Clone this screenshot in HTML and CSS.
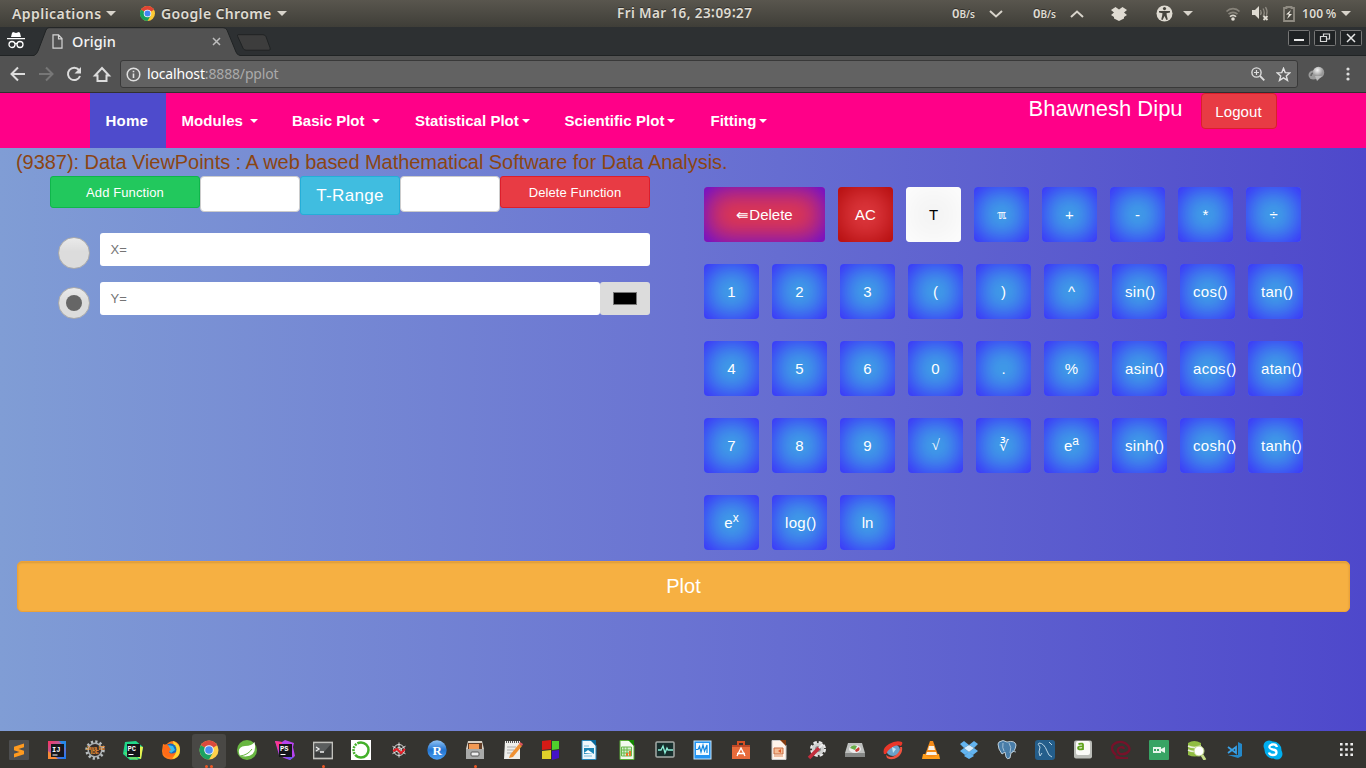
FILE: index.html
```html
<!DOCTYPE html>
<html lang="en">
<head>
<meta charset="utf-8">
<title>Origin</title>
<link rel="stylesheet" href="styles.css">
</head>
<body>
<div class="desktop">
<header class="panel">
  <span class="panel-text apps">Applications</span><i class="tri"></i>
  <svg class="chrome-mini" viewBox="0 0 20 20"><circle cx="10" cy="10" r="10" fill="#fcc934"/><path d="M10 10 1.300 5A10 10 0 0 1 18.700 5z" fill="#e04434"/><path d="M1.300 5A10 10 0 0 0 10 20l4.300-7.500L10 10z" fill="#17a05d"/><circle cx="10" cy="10" r="5" fill="#fff"/><circle cx="10" cy="10" r="4" fill="#4285f4"/></svg>
  <span class="panel-text chrome-name">Google Chrome</span><i class="tri"></i>
  <span class="panel-text clock">Fri Mar 16, 23&#8758;09&#8758;27</span>
  <span class="panel-text net">0<small>B/s</small></span>
  <svg class="chev" width="14" height="8" viewBox="0 0 14 8"><path d="M1 1l6 5.500L13 1" fill="none" stroke="#d8d4cb" stroke-width="2"/></svg>
  <span class="panel-text net net2">0<small>B/s</small></span>
  <svg class="chev" width="14" height="8" viewBox="0 0 14 8"><path d="M1 7l6-5.500L13 7" fill="none" stroke="#d8d4cb" stroke-width="2"/></svg>
  <svg class="dbx" width="16" height="14" viewBox="0 0 16 14"><path d="M4.500 0 8 2.500 11.500 0 16 3l-3 2.500L16 8l-3 2v1.500L8 14l-5-2.500V10L0 8l3-2.500L0 3z" fill="#dfdbd2"/></svg>
  <svg class="access" width="17" height="17" viewBox="0 0 17 17"><circle cx="8.500" cy="8.500" r="8" fill="#dfdbd2"/><circle cx="8.500" cy="3.600" r="1.600" fill="#47453e"/><path d="M3 6h11v1.500l-3.500.8.3 2.200 1 4-1.400.4-1.900-4-1.900 4-1.400-.4 1-4 .3-2.200L3 7.500z" fill="#47453e"/></svg>
  <i class="tri tri-access"></i>
  <svg class="wifi" width="16" height="14" viewBox="0 0 16 14"><g fill="none" stroke-width="1.700"><path d="M1.500 4.500a9 9 0 0 1 13 0" stroke="#87837a"/><path d="M3.500 7.200a6.300 6.300 0 0 1 9 0" stroke="#87837a"/><path d="M5 9.700a4 4 0 0 1 6 0" stroke="#d8d4cb"/></g><circle cx="8" cy="12" r="1.800" fill="#dfdbd2"/></svg>
  <svg class="vol" width="17" height="15" viewBox="0 0 17 15"><path d="M0 4h3l4-4v13L3 9H0z" fill="#dfdbd2"/><path d="M8.500 4q1.500 2.500 0 5M11 2.500q2.500 4 0 8M13.500 1q2.500 4 1 8" fill="none" stroke="#8f8b82" stroke-width="1.300"/><path d="M11.500 10l4 4m0-4l-4 4" stroke="#dfdbd2" stroke-width="1.800"/></svg>
  <svg class="batt" width="12" height="16" viewBox="0 0 12 16"><path d="M3.500 2V1h5v1H11v13H1V2z" fill="none" stroke="#8f8b82" stroke-width="1.800"/><path d="M8 4 3 8.500h3L4 13l5-5H6z" fill="#f0ece3"/></svg>
  <span class="panel-text pct">100&#8201;%</span><i class="tri"></i>
</header>

<div class="tabstrip">
  <svg class="incog" width="18" height="17" viewBox="0 0 18 17"><path d="M5 1l1-1 3 1 3-1 1 1 1 4H4zM0 6h18v1.300H0z" fill="#fff"/><g fill="none" stroke="#fff" stroke-width="1.300"><circle cx="5" cy="12.500" r="3"/><circle cx="13" cy="12.500" r="3"/><path d="M8 12q1-1 2 0"/></g></svg>
  <div class="tab">
    <svg class="tab-shape" width="206" height="29" viewBox="0 0 206 29"><path d="M0 28.500Q3 27 4 24L12 3Q13 .7 15 .7H189Q192 .7 193 3L202 25Q203 28 206 28.500V29H0z" fill="#525252"/><path d="M0 28.500Q3 27 4 24L12 3Q13 .7 15 .7H189Q192 .7 193 3L202 25Q203 28 206 28.500" fill="none" stroke="#202324"/></svg>
    <svg class="doc" width="11" height="15" viewBox="0 0 11 15"><path d="M1 .8h5.500L10 4.500v9.700H1zM6.500.8v4H10" fill="none" stroke="#d5d5d5" stroke-width="1.200"/></svg>
    <span class="tab-title">Origin</span>
    <svg class="tab-x" width="9" height="9" viewBox="0 0 9 9"><path d="M1 1l7 7m0-7L1 8" stroke="#bdbdbd" stroke-width="1.500"/></svg>
  </div>
  <svg class="newtab" width="34" height="17" viewBox="0 0 34 17"><path d="M1 .7h25q2 0 3 2l4 11q1 2.500-1 2.500H9q-2 0-3-2L.7 2.500Q0 .7 1 .7z" fill="#3d3d3d" stroke="#202324"/></svg>
  <div class="winbtns">
    <svg width="22" height="16" viewBox="0 0 22 16"><rect x=".5" y=".5" width="21" height="15" rx="1" fill="#1f2224" stroke="#777"/><path d="M6 10h10" stroke="#e8e8e8" stroke-width="2"/></svg>
    <svg width="22" height="16" viewBox="0 0 22 16"><rect x=".5" y=".5" width="21" height="15" rx="1" fill="#1f2224" stroke="#777"/><path d="M6.500 6.500h6v5h-6zM9.500 6V4h6v5H13" fill="none" stroke="#d8d8d8" stroke-width="1.200"/></svg>
    <svg width="22" height="16" viewBox="0 0 22 16"><rect x=".5" y=".5" width="21" height="15" rx="1" fill="#1f2224" stroke="#777"/><path d="M7 4l8 8m0-8l-8 8" stroke="#e8e8e8" stroke-width="1.500"/></svg>
  </div>
</div>

<div class="toolbar">
  <svg class="nav-icons" width="112" height="36" viewBox="0 0 112 36"><g fill="none" stroke-width="2"><path d="M25 18H12m6-6.500L11.500 18l6.500 6.500" stroke="#dcdcdc"/><path d="M39 18h13m-6-6.500 6.500 6.500-6.500 6.500" stroke="#777"/><path d="M79 14a6.200 6.200 0 1 0 1 6" stroke="#dcdcdc"/><path d="M95 19.500h2.500v5.500h9v-5.500h2.500L102 12z" stroke="#dcdcdc"/></g><path d="M81 11v6.500h-6.500z" fill="#dcdcdc"/></svg>
  <div class="omnibox">
    <svg class="info" width="15" height="15" viewBox="0 0 15 15"><circle cx="7.500" cy="7.500" r="6.300" fill="none" stroke="#e0e0e0" stroke-width="1.500"/><path d="M7.500 6.500v4.500M7.500 3.700v1.600" stroke="#e0e0e0" stroke-width="1.600"/></svg>
    <span class="url">localhost<em>:8888/pplot</em></span>
    <svg class="mag" width="14" height="14" viewBox="0 0 14 14"><circle cx="5.500" cy="5.500" r="4.600" fill="none" stroke="#ddd" stroke-width="1.400"/><path d="M9 9l4.300 4.300" stroke="#ddd" stroke-width="1.800"/><path d="M3 5.500h5M5.500 3v5" stroke="#ddd" stroke-width="1.200"/></svg>
    <svg class="star" width="15" height="15" viewBox="0 0 15 15"><path d="M7.500 1.300 9.200 5.600l4.600.3-3.500 3 1.200 4.500-4-2.500-4 2.500 1.200-4.500-3.500-3 4.600-.3z" fill="none" stroke="#e2e2e2" stroke-width="1.400"/></svg>
  </div>
  <svg class="ext" width="17" height="16" viewBox="0 0 17 16"><defs><radialGradient id="ball" cx=".4" cy=".3"><stop offset="0" stop-color="#f4f4f4"/><stop offset="1" stop-color="#999"/></radialGradient></defs><ellipse cx="5.500" cy="9" rx="5" ry="4.500" fill="#9b9b9b"/><path d="M3 10q0-3 3-3" fill="none" stroke="#666" stroke-width="1.500"/><circle cx="10.500" cy="6.500" r="5.700" fill="url(#ball)"/><path d="M7 10l2 5 5-5z" fill="#bbb"/></svg>
  <svg class="kebab" width="4" height="14" viewBox="0 0 4 14"><g fill="#ddd"><circle cx="2" cy="2" r="1.600"/><circle cx="2" cy="7" r="1.600"/><circle cx="2" cy="12" r="1.600"/></g></svg>
</div>

<main class="page">
  <nav class="nav">
    <a class="item home">Home</a>
    <a class="item modules">Modules <i class="caret"></i></a>
    <a class="item basic">Basic Plot <i class="caret"></i></a>
    <a class="item stat">Statistical Plot<i class="caret"></i></a>
    <a class="item sci">Scientific Plot<i class="caret"></i></a>
    <a class="item fit">Fitting<i class="caret"></i></a>
    <span class="user">Bhawnesh Dipu</span>
    <button class="logout">Logout</button>
  </nav>
  <h1 class="title">(9387): Data ViewPoints : A web based Mathematical Software for Data Analysis.</h1>
  <div class="work">
    <section class="functions">
      <div class="controls">
        <button class="btn add">Add Function</button>
        <div class="range-box"></div>
        <button class="btn trange">T-Range</button>
        <div class="range-box"></div>
        <button class="btn del">Delete Function</button>
      </div>
      <div class="row rx"><span class="radio"></span><div class="field">X=</div></div>
      <div class="row ry"><span class="radio on"></span><div class="field">Y=</div><span class="color"><i></i></span></div>
    </section>
    <section class="keypad">
      <div class="keys"><div class="key wide">&#8666;Delete</div><div class="key ac">AC</div><div class="key t">T</div><div class="key pi">&#8508;</div><div class="key">+</div><div class="key">-</div><div class="key">*</div><div class="key">÷</div></div>
      <div class="keys"><div class="key">1</div><div class="key">2</div><div class="key">3</div><div class="key">(</div><div class="key">)</div><div class="key">^</div><div class="key fn">sin()</div><div class="key fn">cos()</div><div class="key fn">tan()</div></div>
      <div class="keys"><div class="key">4</div><div class="key">5</div><div class="key">6</div><div class="key">0</div><div class="key">.</div><div class="key">%</div><div class="key fn">asin()</div><div class="key fn">acos()</div><div class="key fn">atan()</div></div>
      <div class="keys"><div class="key">7</div><div class="key">8</div><div class="key">9</div><div class="key root">√</div><div class="key">∛</div><div class="key">e<sup>a</sup></div><div class="key fn">sinh()</div><div class="key fn">cosh()</div><div class="key fn">tanh()</div></div>
      <div class="keys"><div class="key">e<sup>x</sup></div><div class="key fn">log()</div><div class="key">ln</div></div>
    </section>
  </div>
  <button class="plot">Plot</button>
</main>

<footer class="dock">
  <span class="app"><svg viewBox="0 0 20 20"><rect width="20" height="20" rx="1" fill="#4d4e50"/><path d="M15 3.500v3.800L9.500 9l5.500 1.800v3.500L5 17.500v-3.800l5.500-1.700L5 10.200V6.700z" fill="#ff9a1f"/></svg></span>
  <span class="app"><svg viewBox="0 0 20 20"><defs><linearGradient id="ij" x2="1" y2="1"><stop offset="0" stop-color="#fe315d"/><stop offset=".5" stop-color="#a268b0"/><stop offset="1" stop-color="#087cfa"/></linearGradient></defs><path d="M1 1h18v18H1z" fill="url(#ij)"/><path d="M12 1h7v8z" fill="#2788e8"/><path d="M1 11v8h10z" fill="#f98b36"/><rect x="4" y="4" width="13" height="13" fill="#16161c"/><text x="5" y="11.500" class="mono">IJ</text><path d="M5.500 15h5" stroke="#fff"/></svg></span>
  <span class="app"><svg viewBox="0 0 20 20"><circle cx="10" cy="10" r="8" fill="none" stroke="#b9bec0" stroke-width="3.500" stroke-dasharray="2.100 2.090"/><circle cx="10" cy="10" r="6.800" fill="#332b28" stroke="#a9aeb0" stroke-width="1.500"/><text x="1" y="9.700" class="tiny">Java EE</text><text x="5.500" y="13.500" class="tiny">IDE</text></svg></span>
  <span class="app"><svg viewBox="0 0 20 20"><path d="M2 2l11-1 7 6-1 5-1 7-11 1-7-6z" fill="#21d789"/><path d="M15 6l5 1-2 12-6-3z" fill="#e8f04f"/><path d="M1 12l6 7 8 1-3-5z" fill="#66dd6d"/><rect x="4" y="4" width="13" height="13" fill="#15151a"/><text x="4.500" y="11" class="mono">PC</text><path d="M5.500 14.500h5" stroke="#fff"/></svg></span>
  <span class="app"><svg viewBox="0 0 20 20"><path d="M2 4l3 1q3-4 8-4 6 2 6 8 0 10-9 10.500Q1 19 1 11z" fill="#ff7b1b"/><path d="M12 1q7 3 7 9 0 8-8 9 5-5 2-12z" fill="#ffd633"/><circle cx="9.500" cy="9.500" r="6" fill="#1767bc"/><path d="M2 7q-1 8 5 10 7 0 8-5-5 3-7 0l4-2-4-4-3-2z" fill="#ff6b18"/><path d="M7 5l5 1 2 4-4 3-2-2 2-1z" fill="#38bcec"/></svg></span>
  <span class="app active"><svg viewBox="0 0 20 20"><circle cx="10" cy="10" r="9.500" fill="#ffd14a"/><path d="M10 10 1.800 5.200A9.500 9.500 0 0 1 18.200 5.200z" fill="#dc4a3d"/><path d="M1.800 5.200A9.500 9.500 0 0 0 10 19.500l4-7L10 10z" fill="#1ba261"/><circle cx="10" cy="10" r="4.800" fill="#f1f1f1"/><circle cx="10" cy="10" r="3.800" fill="#4c8df6"/></svg><i class="dots two"></i></span>
  <span class="app"><svg viewBox="0 0 20 20"><circle cx="10" cy="10" r="10" fill="#68b641"/><path d="M3 16Q-1 7 8 6q7 0 9.500-4 3 14-9 14.500z" fill="#fff"/><path d="M3 16q8-1 12-7" fill="none" stroke="#68b641"/></svg></span>
  <span class="app"><svg viewBox="0 0 20 20"><path d="M0 1l7 1 3-2 9 3-1 4 2 9-5 4-6-2-5-3z" fill="#b743ee"/><path d="M0 1l7 1-2 12z" fill="#fc378f"/><path d="M10 17h9l-4 3z" fill="#7156ef"/><rect x="4" y="4" width="13" height="13" fill="#15151a"/><text x="5" y="11" class="mono">PS</text><path d="M5.500 14.500h5" stroke="#fff"/></svg></span>
  <span class="app"><svg viewBox="0 0 20 20"><rect x=".5" y="2.500" width="19" height="16" fill="#3b3d3d" stroke="#c1c1bc" stroke-width="1.700"/><path d="M2 4h16l-7 8H2z" fill="#5b5e5e"/><path d="M3 7l3 2-3 2M7 12h4" fill="none" stroke="#eee" stroke-width="1.300"/></svg><i class="dots"></i></span>
  <span class="app"><svg viewBox="0 0 20 20"><path d="M0 0h20v20H0z" fill="#fff"/><circle cx="10" cy="10" r="7.500" fill="none" stroke="#43b02a" stroke-width="2.500" stroke-dasharray="30 1 2 1 2 1 2 1 2 1" transform="rotate(-90 10 10)"/></svg></span>
  <span class="app"><svg viewBox="0 0 20 20"><g fill="none" stroke="#ddd"><circle cx="10" cy="10" r="5.500"/><path d="M10 2.500v15M3.500 6.300l13 7.500M3.500 13.700l13-7.500"/><circle cx="10" cy="10" r="2.500"/></g><path d="M4 11l4-2 4 4 4-4" fill="none" stroke="#e51d25" stroke-width="2"/></svg></span>
  <span class="app"><svg viewBox="0 0 20 20"><defs><linearGradient id="r" x2="0" y2="1"><stop offset="0" stop-color="#91c4f5"/><stop offset=".5" stop-color="#2274d1"/><stop offset="1" stop-color="#4b9ff1"/></linearGradient></defs><circle cx="10" cy="10" r="9.700" fill="url(#r)"/><text x="5.500" y="14.500" class="serif">R</text></svg></span>
  <span class="app"><svg viewBox="0 0 20 20"><path d="M3 1h14l2 8H1z" fill="#d8d1c5"/><path d="M3 3h14v6H3z" fill="#653f27"/><path d="M4 4h10v5H4z" fill="#f39a54"/><path d="M1 9h18v10H1z" fill="#a9aaa9"/><rect x="6" y="12" width="8" height="4" rx="1" fill="#eee" stroke="#555"/></svg><i class="dots"></i></span>
  <span class="app"><svg viewBox="0 0 20 20"><path d="M2 1h15v18H1z" fill="#eeeeea"/><path d="M3 2h13" stroke="#555" stroke-width="2" stroke-dasharray="1 1"/><path d="M4 7h9M4 10h7M4 13h5" stroke="#aaa"/><path d="M7 15 16 4l3 2-9 11-4 1z" fill="#ee9032"/><path d="M16 4l1-2 3 2-1 2z" fill="#de555d"/></svg></span>
  <span class="app"><svg viewBox="0 0 20 20"><path d="M1 1l9-1v9l-9 1z" fill="#d51b16"/><path d="M11 1l7 0v8l-7 1z" fill="#4fce2c"/><path d="M1 11l9-1v9H1z" fill="#ded02a"/><path d="M11 11l7-1v8l-7 2z" fill="#4412c7"/></svg></span>
  <span class="app"><svg viewBox="0 0 20 20"><path d="M3 .5h10l4 5v14H3z" fill="#edf7fc" stroke="#2687bb"/><path d="M11 0h6v6z" fill="#07689a"/><rect x="5" y="8" width="10" height="6" fill="#1985b5"/><path d="M5 13l4-3 6 4z" fill="#fff"/><path d="M5 6h5M5 16h8" stroke="#79bad9"/></svg></span>
  <span class="app"><svg viewBox="0 0 20 20"><path d="M3 .5h10l4 5v14H3z" fill="#f3faed" stroke="#58aa36"/><path d="M11 0h6v6z" fill="#138700"/><path d="M4.500 7h10v9h-10zM7 7v9M10 7v9M5 10h10M5 13h10" fill="#d9efd0" stroke="#68b849"/><path d="M9 16h2v-3H9zm3 0h2v-5h-2z" fill="#e57828"/></svg></span>
  <span class="app"><svg viewBox="0 0 20 20"><rect x="1" y="2" width="18" height="15" rx="1" fill="#172f2d" stroke="#a5aaa7" stroke-width="1.500"/><path d="M3 10h3l2-4 2 7 2-5 1 2h5" fill="none" stroke="#8df1d9" stroke-width="1.300"/></svg></span>
  <span class="app"><svg viewBox="0 0 20 20"><rect x="1" y="1" width="17" height="18" fill="#2294f3" stroke="#c6e5fb"/><rect x="3" y="3" width="13" height="12" fill="#f1faff"/><path d="M3 9.500h2l1.500-3L8 12l2-7 1.500 6L14 5v8" fill="none" stroke="#1688df" stroke-width="1.200"/></svg></span>
  <span class="app"><svg viewBox="0 0 20 20"><path d="M1 5h18v14H1z" fill="#e76b3b"/><path d="M7 5V2h6v3" fill="none" stroke="#d74f23" stroke-width="2"/><path d="M1 5h18v2H1z" fill="#bd4827"/><path d="M6 16l4-8 4 8M6 13.500h8" fill="none" stroke="#fff" stroke-width="1.300"/></svg></span>
  <span class="app"><svg viewBox="0 0 20 20"><path d="M3 .5h10l4 5v14H3z" fill="#fff4eb" stroke="#ccc"/><path d="M11 0h6v6z" fill="#853c10"/><path d="M5 8h9v6H5z" fill="#f5bd96" stroke="#c76d40"/><path d="M9 11l3-2v4z" fill="#db5b2c"/><path d="M5 16h9" stroke="#e28958"/></svg></span>
  <span class="app"><svg viewBox="0 0 20 20"><circle cx="11" cy="9" r="6" fill="#cfd0cf" stroke="#e9e9e9" stroke-width="4" stroke-dasharray="3 1.700"/><circle cx="11" cy="9" r="6" fill="#cfd0cf"/><circle cx="11" cy="9" r="3" fill="#8d908f"/><path d="M2 18 12 8" stroke="#c22e3c" stroke-width="3.500"/><path d="M12 8l4-4" stroke="#eee" stroke-width="2"/></svg></span>
  <span class="app"><svg viewBox="0 0 20 20"><path d="M3 3h14l3 10v4H0v-4z" fill="#bfc1bf"/><path d="M0 13h20v4H0z" fill="#858785"/><ellipse cx="10" cy="9" rx="6" ry="4" fill="#eee"/><path d="M5 8q2-4 7-2l-2 4z" fill="#68ad49"/><path d="M10 10l4-3q2 4-3 5z" fill="#c93b32"/></svg></span>
  <span class="app"><svg viewBox="0 0 20 20"><ellipse cx="10" cy="10" rx="7" ry="6" fill="#6ba2c9"/><path d="M1 14Q-1 8 6 4t13-2q1 2-1 4-5-2-10 2-4 3-5 6z" fill="#ea3729"/><path d="M3 15q5 4 10 0 5-4 4-8l2 0q1 6-4 10-6 4-11 1z" fill="#f05340"/><path d="M9 7l4 2-3 4z" fill="#c1e6f5"/></svg></span>
  <span class="app"><svg viewBox="0 0 20 20"><path d="M2 14h16l1 5H1z" fill="#ff9d19"/><path d="M9 1h3l5 14q-7 4-13 0z" fill="#f58b18"/><path d="M8 6h5l1 4H7zM6 12h9l1 3H5z" fill="#f7f2e8"/></svg></span>
  <span class="app"><svg viewBox="0 0 20 20"><path d="M5 1l5 4-5 3-4-4zm10 0l4 3-4 4-5-3zM1 11l4-3 5 4-4 3zm18 0-4-3-5 4 4 3zM5 16l5-4 5 4-5 3z" fill="#63b4ef"/><path d="M5 8l5-3 5 3-5 4z" fill="#d7efff"/></svg></span>
  <span class="app"><svg viewBox="0 0 20 20"><path d="M2 2q4-3 8 0 8-2 9 3-1 7-5 8l-1 5q-3 2-4-1l-1-5-3 2Q1 9 1 4z" fill="#497da8" stroke="#dce8ef" stroke-width=".8"/><path d="M6 3q-1 5 1 8M12 3q3 4 1 10m2-2 4 1" fill="none" stroke="#b9d0df" stroke-width=".8"/></svg></span>
  <span class="app"><svg viewBox="0 0 20 20"><rect width="20" height="20" rx="3" fill="#245e8b"/><path d="M5 16l-1-4 1-5q-3-3-1-4 5 0 8 8l2 4 3 2M5 16l2-3m7-11 3 3" fill="none" stroke="#b9d4e4"/></svg></span>
  <span class="app"><svg viewBox="0 0 20 20"><rect x="1" y=".5" width="18" height="18" rx="2" fill="#bbbdb8"/><rect x="3" y="1" width="14" height="14" rx="2" fill="#fafaf7"/><path d="M5.500 4q5-1 4.500 1v4q-5 1-5-1 0-2 5-1.500" fill="none" stroke="#60a31d" stroke-width="1.800"/></svg></span>
  <span class="app"><svg viewBox="0 0 20 20"><path d="M5 15q-6-5-3-10 5-5 12-2 6 4 4 8-3 4-9 3-4-3-1-6 4-2 5 1" fill="none" stroke="#76122a" stroke-width="2.300"/><path d="M5 15q5 3 12 2v2H6q-3-1-1-4z" fill="#76122a"/></svg></span>
  <span class="app"><svg viewBox="0 0 20 20"><rect width="20" height="20" rx="1" fill="#37a464"/><path d="M4 7h8v6H4zM12 9l4-2v6l-4-2" fill="#e6f5ea"/><path d="M5 10h6" stroke="#37a464" stroke-width="2" stroke-dasharray="2 1"/></svg></span>
  <span class="app"><svg viewBox="0 0 20 20"><path d="M1 3q6-4 13 0v12q-6 3-13 0z" fill="#91bd43"/><path d="M1 6q6 3 13 0M1 10q6 3 13 0" fill="none" stroke="#e8efd9" stroke-width="1.500"/><path d="M15 15l3 5" stroke="#c6dc8a" stroke-width="3"/><circle cx="12" cy="11" r="5" fill="#fff" stroke="#bcd582"/></svg></span>
  <span class="app"><svg viewBox="0 0 20 20"><path d="M13 2l4 2v12l-4 2-10-3 10 0z" fill="#2489ca"/><path d="M3 7l8 6V7l-8 6" fill="none" stroke="#3aa1e7" stroke-width="1.800"/></svg></span>
  <span class="app"><svg viewBox="0 0 20 20"><circle cx="10" cy="10" r="8.500" fill="#00aff0"/><circle cx="6" cy="6" r="5.500" fill="#00aff0"/><circle cx="14" cy="14" r="5.500" fill="#00aff0"/><path d="M14 7q-1-3-4.500-2.500Q6 5 6.500 7.500 7 9 10 9.500q3.500.5 3.500 3 0 2.500-3.500 2.500T6 12.500" fill="none" stroke="#fff" stroke-width="2.300"/></svg></span>
  <svg class="grid" width="13" height="13" viewBox="0 0 13 13"><path d="M0 1.300h13M0 6.500h13M0 11.700h13" stroke="#eee" stroke-width="2.600" stroke-dasharray="2.600"/></svg>
</footer>
</div>
</body>
</html>
```
FILE: styles.css
```css
* { box-sizing: border-box; }
body { margin: 0; font-family: "Liberation Sans", Arial, sans-serif; }
.desktop { width: 1366px; height: 768px; overflow: hidden; display: flex; flex-direction: column; }
svg { flex: none; display: block; }

.panel { height: 27px; flex: none; display: flex; align-items: center; background: linear-gradient(#59564e, #3f3e38); padding-left: 12px; color: #dfdbd2; }
.panel-text { font: 600 14px/27px "Noto Sans", sans-serif; white-space: nowrap; text-shadow: 0 -1px 0 #33312c; flex: none; }
.apps { width: 94px; letter-spacing: .45px; }
.tri { flex: none; width: 0; border: 5px solid transparent; border-top-color: #d8d4cb; border-bottom: 0; }
.chrome-mini { width: 15px; height: 15px; margin-left: 24px; margin-right: 6px; }
.chrome-name { width: 116px; letter-spacing: .35px; }
.clock { margin-left: 330px; width: 134px; font-size: 13.5px; letter-spacing: .4px; }
.net { margin-left: 201px; width: 37px; font-size: 13px; }
.net small { font-size: 10px; }
.net2 { margin-left: 30px; }
.dbx { margin-left: 27px; }
.access { margin-left: 29px; }
.tri-access { margin-left: 10px; }
.wifi { margin-left: 32px; }
.vol { margin-left: 11px; }
.batt { margin-left: 14px; }
.pct { margin-left: 7px; width: 39px; font-size: 12px; letter-spacing: .3px; }

.tabstrip { height: 29px; flex: none; background: #2d3032; display: flex; border-bottom: 1px solid #202324; }
.incog { margin: 5px 0 0 7px; }
.tab { width: 206px; height: 29px; margin-left: 9px; display: flex; align-items: center; position: relative; }
.tab-shape { position: absolute; left: 0; top: 0; }
.doc, .tab-title, .tab-x { position: relative; }
.doc { margin-left: 18px; }
.tab-title { font: 500 14.500px/27px "Noto Sans", sans-serif; color: #f4f4f4; margin-left: 9px; width: 140px; letter-spacing: .1px; margin-bottom: 1px; }
.newtab { margin: 7px 0 0 -3px; }
.winbtns { margin: 3px 4px 0 auto; display: flex; gap: 4px; }

.toolbar { height: 37px; flex: none; background: #525252; border-bottom: 1px solid #303030; display: flex; align-items: center; }
.omnibox { margin-left: 8px; width: 1178px; height: 28px; background: #626262; border: 1px solid #393939; border-radius: 3px; display: flex; align-items: center; padding-left: 5px; }
.url { margin-left: 6px; font: 14px/26px "Noto Sans", sans-serif; color: #fff; letter-spacing: -.15px; }
.url em { font-style: normal; color: #aaa; }
.mag { margin-left: auto; }
.star { margin: 0 6px 0 11px; }
.ext { margin-left: 10px; }
.kebab { margin-left: 21px; }

.page { height: 638px; flex: none; background: linear-gradient(to right, #809dd5 0%, #6a73d2 50%, #4e48cb 100%); }
.nav { height: 55px; background: #ff0088; display: flex; padding-left: 89.5px; color: #fff; }
.item { font-weight: bold; font-size: 15px; line-height: 56px; padding-left: 16px; white-space: nowrap; flex: none; }
.home { width: 76px; background: #4e4bcc; letter-spacing: .2px; }
.modules { width: 110.500px; letter-spacing: .1px; }
.basic { width: 123px; }
.stat { width: 149.500px; letter-spacing: .03px; }
.sci { width: 146px; letter-spacing: .05px; }
.fit { width: 100px; }
.caret { display: inline-block; border: 4.500px solid transparent; border-top-color: #fff; border-bottom: 0; vertical-align: 3px; margin-left: 3px; }
.user { margin-left: 234px; width: 172px; font-size: 22px; line-height: 31px; white-space: nowrap; }
button { font-family: inherit; color: #fff; padding: 0; }
.logout { width: 76px; height: 36px; border: 1px solid #dc1e2c; border-radius: 4px; background: #e83b44; font-size: 15px; letter-spacing: .1px; }
.title { margin: 0; padding-left: 16px; height: 28px; font-size: 20px; line-height: 28px; font-weight: normal; color: #8b4513; letter-spacing: -.052px; }
.work { display: flex; height: 385px; }
.functions { width: 654px; padding-left: 50px; flex: none; }
.controls { display: flex; align-items: flex-start; height: 57px; }
.btn { height: 32px; border-radius: 3px; font-size: 13px; flex: none; letter-spacing: .1px; }
.add { width: 150px; background: #22c85d; border: 1px solid #0fb64b; }
.del { width: 150px; background: #e83b44; border: 1px solid #dc1e2c; }
.trange { width: 100px; height: 39px; background: #40bde0; border: 1px solid #25aed8; font-size: 17px; letter-spacing: .3px; padding-top: 1px; }
.range-box { width: 100px; height: 36px; background: #fff; border: 1px solid #ccc; border-radius: 4px; }
.row { display: flex; height: 49px; align-items: flex-start; padding-left: 8px; }
.radio { width: 32px; height: 32px; margin: 4px 10px 0 0; border-radius: 50%; border: 1px solid #aaa; background: linear-gradient(#eaeaea, #dcdcdc 45%); flex: none; display: grid; place-items: center; }
.ry .radio { margin-top: 5px; }
.on::after { content: ""; width: 16px; height: 16px; border-radius: 50%; background: #666; }
.field { flex: none; width: 550px; height: 33px; background: #fff; border-radius: 3px; padding-left: 10.500px; font-size: 13px; line-height: 33px; color: #757575; }
.ry .field { width: 500px; }
.color { width: 50px; height: 33px; background: #dcdcdc; border-radius: 3px; display: grid; place-items: center; }
.color i { width: 24px; height: 13px; background: #000; border: 1px solid #777; }
.keypad { padding: 11px 0 0 50px; display: flex; flex-direction: column; gap: 22px; }
.keys { display: flex; gap: 13px; height: 55px; }
.key { width: 55px; height: 55px; flex: none; border-radius: 4px; padding: 0 13px; text-align: center; white-space: nowrap; color: #fff; font-size: 15px; line-height: 55px; background: #40a8e5; box-shadow: inset 0 0 30px #3b10ff; }
.fn { letter-spacing: .3px; }
.pi, .root { font-family: "DejaVu Sans", sans-serif; font-size: 13px; }
.root { font-family: "Liberation Serif", serif; font-size: 15px; }
.key sup { font-size: 80%; line-height: 0; position: relative; vertical-align: baseline; top: -.5em; }
.wide { width: 121px; background: #e0384e; box-shadow: inset 0 0 30px #4b03f5; }
.ac { background: #df3a40; box-shadow: inset 0 0 30px #a80000; }
.t { background: #f4f4f4; box-shadow: inset 0 0 30px #fff; color: #000; }
.plot { display: block; margin-left: 17px; width: 1333px; height: 51px; background: #f6b042; border: 1px solid #eea236; border-radius: 5px; font-size: 20px; box-shadow: inset 0 1px 2px rgba(0,0,0,.12); }

.dock { height: 37px; flex: none; background: #353430; display: flex; align-items: center; }
.app { width: 38px; height: 36px; flex: none; display: grid; place-items: center; position: relative; }
.app svg { width: 20px; height: 20px; position: relative; }
.active::before { content: ""; position: absolute; left: 2px; top: 2px; width: 34px; height: 34px; border-radius: 3px; background: #494845; }
.dots { position: absolute; left: 18px; bottom: 0; width: 3px; height: 3px; border-radius: 50%; background: #ee5724; }
.two { left: 15px; box-shadow: 5px 0 #ee5724; }
.mono { font: bold 7px "Liberation Mono", monospace; fill: #fff; }
.tiny { font: bold 5px "Liberation Sans", sans-serif; fill: #ec9231; }
.serif { font: bold 13px "Liberation Serif", serif; fill: #fff; }
.grid { margin-left: 48px; }
```
